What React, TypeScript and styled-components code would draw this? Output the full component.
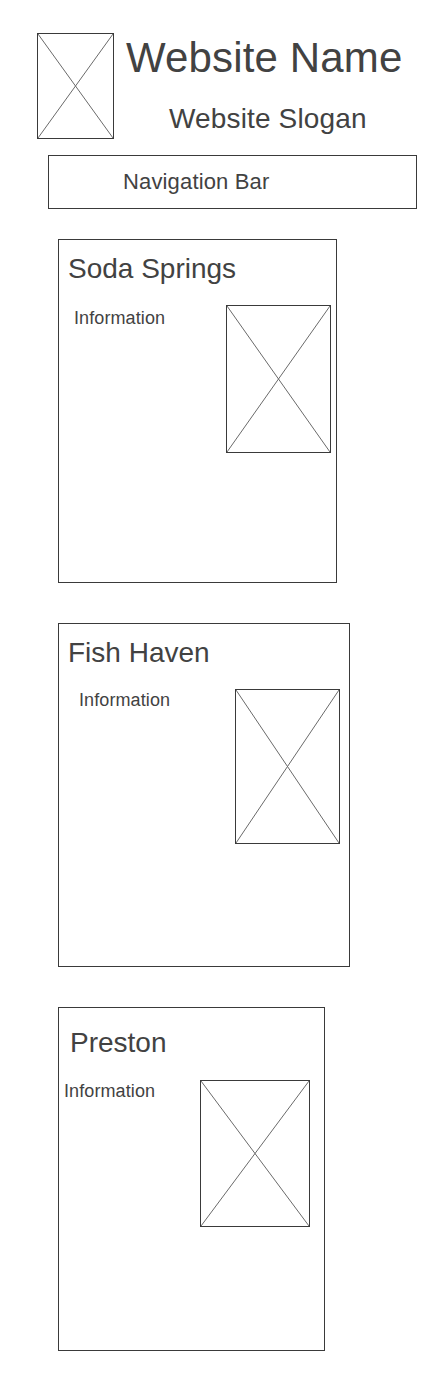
import React from "react";
import styled, { createGlobalStyle } from "styled-components";

const GlobalStyle = createGlobalStyle`
  html, body {
    margin: 0;
    padding: 0;
    background: #ffffff;
  }
  body {
    font-family: "Liberation Sans", Arial, sans-serif;
    color: #424242;
  }
`;

type City = {
  name: string;
  width: number;
  titleTop: number;
  titleLeft: number;
  infoLeft: number;
  infoTop: number;
  imgW: number;
  imgH: number;
  imgRight: number;
  rowGap: number;
};

const cities: City[] = [
  { name: "Soda Springs", width: 279, titleTop: 13, titleLeft: 9, infoLeft: 15, infoTop: 2, imgW: 105, imgH: 148, imgRight: 5, rowGap: 20 },
  { name: "Fish Haven", width: 292, titleTop: 13, titleLeft: 9, infoLeft: 20, infoTop: 0, imgW: 105, imgH: 155, imgRight: 9, rowGap: 20 },
  { name: "Preston", width: 267, titleTop: 19, titleLeft: 11, infoLeft: 5, infoTop: 0, imgW: 110, imgH: 147, imgRight: 14, rowGap: 21 },
];

const Placeholder: React.FC<{ w: number; h: number }> = ({ w, h }) => (
  <ImageBox w={w} h={h}>
    <svg width="100%" height="100%" viewBox="0 0 100 100" preserveAspectRatio="none">
      <line x1="0" y1="0" x2="100" y2="100" stroke="#6a6a6a" strokeWidth="1" vectorEffect="non-scaling-stroke" />
      <line x1="100" y1="0" x2="0" y2="100" stroke="#6a6a6a" strokeWidth="1" vectorEffect="non-scaling-stroke" />
    </svg>
  </ImageBox>
);

const App: React.FC = () => {
  return (
    <Page>
      <GlobalStyle />
      <Header>
        <Placeholder w={77} h={106} />
        <TitleBlock>
          <SiteName>Website Name</SiteName>
          <Slogan>Website Slogan</Slogan>
        </TitleBlock>
      </Header>
      <NavBar>Navigation Bar</NavBar>
      <Cards>
        {cities.map((c) => (
          <Card key={c.name} w={c.width}>
            <CardTitle top={c.titleTop} left={c.titleLeft}>
              {c.name}
            </CardTitle>
            <CardRow gap={c.rowGap}>
              <Info left={c.infoLeft} top={c.infoTop}>
                Information
              </Info>
              <ImageSlot right={c.imgRight}>
                <Placeholder w={c.imgW} h={c.imgH} />
              </ImageSlot>
            </CardRow>
          </Card>
        ))}
      </Cards>
    </Page>
  );
};

export default App;

const Page = styled.div`
  width: 438px;
  min-height: 1389px;
  display: flex;
  flex-direction: column;
  box-sizing: border-box;
  padding-top: 33px;
`;
const Header = styled.div`
  display: flex;
  align-items: flex-start;
  padding-left: 37px;
`;
const ImageBox = styled.div<{ w: number; h: number }>`
  width: ${(p) => p.w}px;
  height: ${(p) => p.h}px;
  box-sizing: border-box;
  border: 1px solid #3a3a3a;
  flex-shrink: 0;
  svg {
    display: block;
  }
`;
const TitleBlock = styled.div`
  display: flex;
  flex-direction: column;
  margin-left: 12px;
  padding-top: 1px;
`;
const SiteName = styled.div`
  font-size: 42px;
  line-height: 48px;
  letter-spacing: 0.15px;
  white-space: nowrap;
`;
const Slogan = styled.div`
  font-size: 28px;
  line-height: 32px;
  margin-top: 21px;
  padding-left: 43px;
  letter-spacing: 0.15px;
  white-space: nowrap;
`;
const NavBar = styled.div`
  margin: 16px 0 0 48px;
  width: 369px;
  height: 54px;
  box-sizing: border-box;
  border: 1px solid #3a3a3a;
  display: flex;
  align-items: center;
  padding-left: 74px;
  font-size: 22px;
  letter-spacing: 0.15px;
`;
const Cards = styled.div`
  display: flex;
  flex-direction: column;
  gap: 40px;
  margin: 30px 0 0 58px;
`;
const Card = styled.div<{ w: number }>`
  width: ${(p) => p.w}px;
  height: 344px;
  box-sizing: border-box;
  border: 1px solid #3a3a3a;
  display: flex;
  flex-direction: column;
`;
const CardTitle = styled.div<{ top: number; left: number }>`
  font-size: 28px;
  line-height: 32px;
  margin-top: ${(p) => p.top}px;
  padding-left: ${(p) => p.left}px;
`;
const CardRow = styled.div<{ gap: number }>`
  display: flex;
  align-items: flex-start;
  margin-top: ${(p) => p.gap}px;
`;
const Info = styled.div<{ left: number; top: number }>`
  font-size: 18px;
  line-height: 22px;
  letter-spacing: 0.1px;
  margin-left: ${(p) => p.left}px;
  margin-top: ${(p) => p.top}px;
`;
const ImageSlot = styled.div<{ right: number }>`
  margin-left: auto;
  margin-right: ${(p) => p.right}px;
`;
